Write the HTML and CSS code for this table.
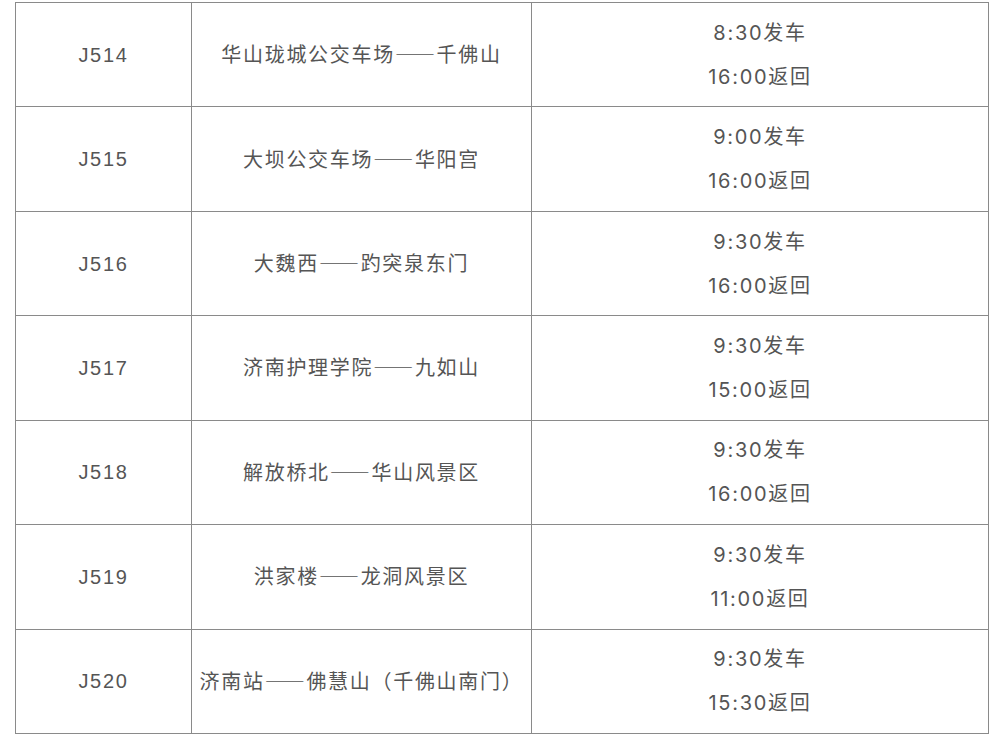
FILE: index.html
```html
<!DOCTYPE html>
<html lang="zh">
<head>
<meta charset="utf-8">
<link rel="stylesheet" href="styles.css">
</head>
<body>
<div class="table">
  <div class="cell"><p>J514</p></div>
  <div class="cell"><p>华山珑城公交车场<span class="dash">——</span>千佛山</p></div>
  <div class="cell time"><p>8:30发车</p><p>16:00返回</p></div>

  <div class="cell"><p>J515</p></div>
  <div class="cell"><p>大坝公交车场<span class="dash">——</span>华阳宫</p></div>
  <div class="cell time"><p>9:00发车</p><p>16:00返回</p></div>

  <div class="cell"><p>J516</p></div>
  <div class="cell"><p>大魏西<span class="dash">——</span>趵突泉东门</p></div>
  <div class="cell time"><p>9:30发车</p><p>16:00返回</p></div>

  <div class="cell"><p>J517</p></div>
  <div class="cell"><p>济南护理学院<span class="dash">——</span>九如山</p></div>
  <div class="cell time"><p>9:30发车</p><p>15:00返回</p></div>

  <div class="cell"><p>J518</p></div>
  <div class="cell"><p>解放桥北<span class="dash">——</span>华山风景区</p></div>
  <div class="cell time"><p>9:30发车</p><p>16:00返回</p></div>

  <div class="cell"><p>J519</p></div>
  <div class="cell"><p>洪家楼<span class="dash">——</span>龙洞风景区</p></div>
  <div class="cell time"><p>9:30发车</p><p>11:00返回</p></div>

  <div class="cell"><p>J520</p></div>
  <div class="cell"><p>济南站<span class="dash">——</span>佛慧山（千佛山南门）</p></div>
  <div class="cell time"><p>9:30发车</p><p>15:30返回</p></div>
</div>
</body>
</html>
```

FILE: styles.css
```css
html, body {
  margin: 0;
  padding: 0;
  background: #fff;
}
body {
  font-family: "Liberation Sans", "Noto Sans CJK SC", sans-serif;
  color: #555;
  font-size: 20px;
}
.table {
  display: grid;
  grid-template-columns: 175px 339px 456px;
  grid-auto-rows: 103.43px;
  gap: 1px;
  padding: 1px;
  background: #8a8a8a;
  width: 974px;
  box-sizing: border-box;
  margin: 2px 0 0 15px;
}
.cell {
  background: #fff;
  display: flex;
  flex-direction: column;
  align-items: center;
  justify-content: center;
  text-align: center;
  letter-spacing: 1.7px;
  line-height: 44px;
}
.cell p {
  margin: 0;
  white-space: nowrap;
}
.time {
  font-family: "Inter", "Noto Sans CJK SC", sans-serif;
}
.dash {
  font-family: "Noto Sans CJK SC", sans-serif;
}
```
